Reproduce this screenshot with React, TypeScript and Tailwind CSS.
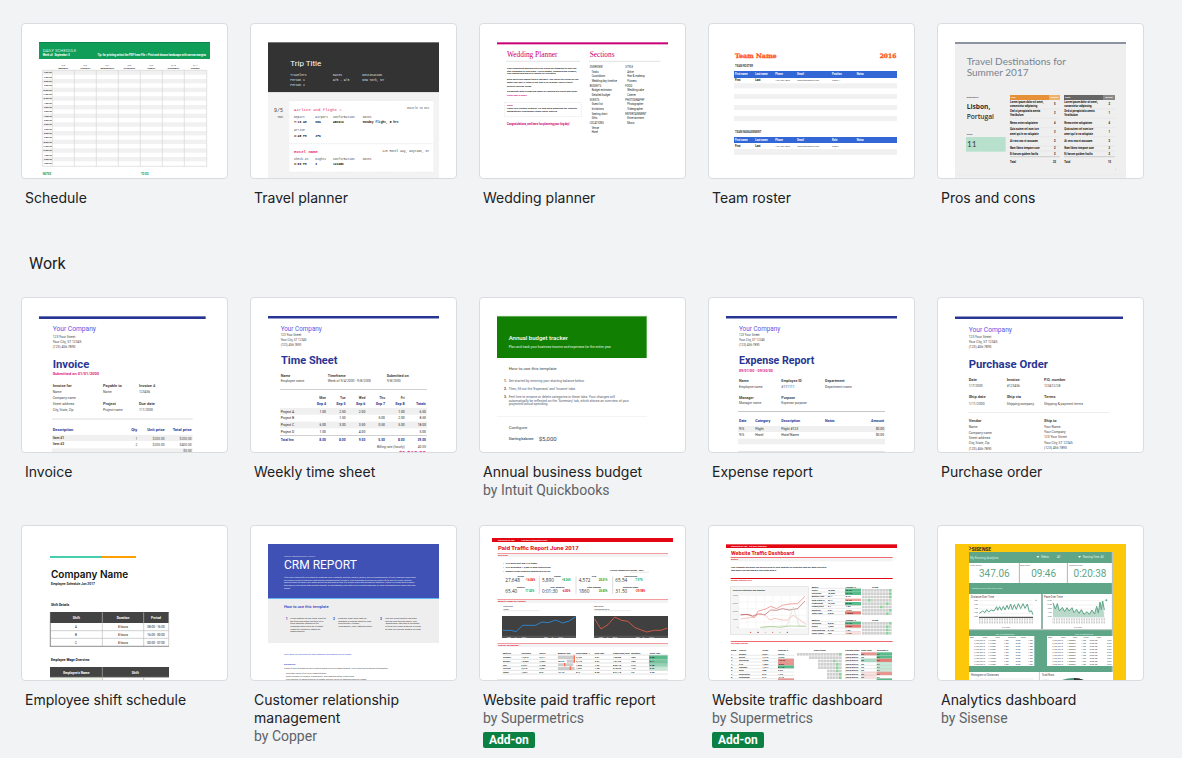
import type { ReactNode } from "react";

const MONO = "'Liberation Mono', monospace";
const SERIF = "'Liberation Serif', serif";
const SLAB = "'DejaVu Serif', serif";
const LATO = "Lato, sans-serif";
const OPEN = "'Open Sans', sans-serif";
const INTER = "Inter, sans-serif";

type TextProps = {
  x: number;
  y: number;
  s?: number;
  c?: string;
  b?: boolean | number;
  f?: string;
  end?: boolean;
  mid?: boolean;
  children: ReactNode;
};

function T({ x, y, s = 10, c = "#444", b, f, end, mid, children }: TextProps) {
  return (
    <text
      x={x}
      y={y}
      className="whitespace-pre"
      fontSize={s}
      fill={c}
      fontWeight={b === true ? 700 : b || 400}
      fontFamily={f}
      textAnchor={end ? "end" : mid ? "middle" : "start"}
    >
      {children}
    </text>
  );
}

// a block of text lines, one under the other
function Lines({ lines, y, step, ...rest }: Omit<TextProps, "children"> & { lines: string[]; step: number }) {
  return (
    <>
      {lines.map((line, i) => (
        <T key={i} y={y + i * step} {...rest}>
          {line}
        </T>
      ))}
    </>
  );
}

// one table row: the same baseline, a list of columns
function Row({ cells, xs, ...rest }: Omit<TextProps, "children" | "x"> & { cells: string[]; xs: number[] }) {
  return (
    <>
      {cells.map((cell, i) => (
        <T key={i} x={xs[i]} {...rest}>
          {cell}
        </T>
      ))}
    </>
  );
}

function Box({ x, y, w, h, c }: { x: number; y: number; w: number; h: number; c: string }) {
  return <rect x={x} y={y} width={w} height={h} fill={c} />;
}

// thumbnails are drawn three units to the pixel
function Thumb({ x, y, children }: { x: number; y: number; children: ReactNode }) {
  return (
    <svg viewBox={`${x} ${y} 615 462`} className="block w-full font-['Roboto',sans-serif]" aria-hidden="true">
      {children}
    </svg>
  );
}

function ScheduleThumb() {
  const days = ["MONDAY", "TUESDAY", "WEDNESDAY", "THURSDAY", "FRIDAY", "SATURDAY", "SUNDAY"];
  return (
    <Thumb x={36} y={42}>
      <Box x={87} y={96} w={513} h={51} c="#0f9d58" />
      <Box x={87} y={96} w={513} h={2} c="#0b7d45" />
      <T x={98} y={126} s={13} c="#d5f0e2">DAILY SCHEDULE</T>
      <T x={98} y={138} s={8} c="#fff" b>Week of:  September 5</T>
      <T x={588} y={138} s={8} c="#fff" b end>
        Tip: for printing select the PDF from File &gt; Print and choose landscape with narrow margins
      </T>
      {days.map((day, i) => (
        <g key={day}>
          <T x={160 + i * 66} y={167} s={7} mid>{`9/${5 + i}`}</T>
          <T x={160 + i * 66} y={176} s={7} c="#222" b mid>{day}</T>
        </g>
      ))}
      {Array.from({ length: 22 }, (_, i) => (
        <g key={i}>
          {i % 2 === 0 && <Box x={97} y={181 + i * 13} w={492} h={13} c="#f1f1f1" />}
          <T x={125} y={190 + i * 13} s={6} c="#222" b end>
            {`${((i + 5) % 12) + 1}:00 ${i < 6 ? "AM" : "PM"}`}
          </T>
        </g>
      ))}
      <path
        d="M97 181H590V469H97ZM127 181V469M193 181V469M259 181V469M325 181V469M391 181V469M457 181V469M523 181V469"
        fill="none"
        stroke="#d4d4d4"
        strokeWidth="2"
      />
      <T x={98} y={494} s={8} c="#0f9d58" b>NOTES</T>
      <T x={393} y={494} s={8} c="#0f9d58" b>TO DO</T>
    </Thumb>
  );
}

function TravelThumb() {
  return (
    <Thumb x={33} y={42}>
      <Box x={84} y={97} w={513} h={150} c="#333" />
      <Box x={84} y={247} w={513} h={260} c="#f3f3f3" />
      <T x={151} y={167} s={24} c="#fff">Trip Title</T>
      <Lines lines={["Travelers", "Person 1", "Person 2"]} x={151} y={198} step={15} s={9} c="#eee" f={MONO} />
      <Lines lines={["Dates", "9/5 - 9/8"]} x={279} y={198} step={15} s={9} c="#eee" f={MONO} />
      <Lines lines={["Destination", "New York, NY"]} x={367} y={198} step={15} s={9} c="#eee" f={MONO} />
      <Box x={148} y={271} w={432} h={217} c="#fff" />
      <path d="M148 271H580M148 401H580M148 487H580" stroke="#ddd" strokeWidth="2" strokeDasharray="3 2" />
      <T x={102} y={305} s={15} f={MONO}>9/5</T>
      <T x={113} y={324} s={9} f={MONO}>Mon</T>
      <T x={162} y={302} s={12} c="#e91e63" f={MONO}>Airline and flight #</T>
      <T x={567} y={298} s={8} f={MONO} end>Seattle to NYC</T>
      <Row cells={["Depart", "Airport", "Confirmation", "Notes"]} xs={[162, 226, 279, 368]} y={323} s={9} f={MONO} />
      <Row cells={["7:10 AM", "SEA", "ABCD12", "Monday flight, 5 hrs"]} xs={[162, 226, 279, 368]} y={338} s={9} c="#111" b f={MONO} />
      <T x={162} y={362} s={9} f={MONO}>Arrive</T>
      <Row cells={["3:45 PM", "JFK"]} xs={[162, 226]} y={380} s={9} c="#111" b f={MONO} />
      <T x={162} y={429} s={12} c="#e91e63" b f={MONO}>Hotel name</T>
      <T x={567} y={426} s={9} f={MONO} end>123 Hotel Way, Anytown, NY</T>
      <Row cells={["Check-in", "Nights", "Confirmation", "Notes"]} xs={[162, 226, 279, 368]} y={451} s={9} f={MONO} />
      <Row cells={["3:00 PM", "3", "123ABC"]} xs={[162, 226, 279]} y={466} s={9} c="#111" b f={MONO} />
    </Thumb>
  );
}

function WeddingThumb() {
  return (
    <Thumb x={30} y={42}>
      <Box x={81} y={97} w={513} h={6} c="#c90076" />
      <T x={111} y={142} s={22} c="#c90076" f={SERIF}>Wedding Planner</T>
      <T x={359} y={142} s={22} c="#c90076" f={SERIF}>Sections</T>
      <path d="M108 154H330M357 154H571" stroke="#d5d5d5" strokeWidth="2" />
      <Lines
        lines={["Start something planning easier by using this template to help you", "stay organized in your plans. Here's budget, shopping and vendors,", "your budget and tables to guests for reviewing."]}
        x={111} y={177} step={8} s={7} c="#111" b
      />
      <Lines
        lines={["Each sheet can support with a category. You can fill the areas as you", "make your day! If listed in this text or to consider each of these", "projects specific needs."]}
        x={111} y={210} step={10} s={7} c="#111" b
      />
      <T x={111} y={246} s={7} c="#111" b>Collaborate with friends and family by sharing this sheet with them:</T>
      <T x={111} y={257} s={7} c="#c90076" b>Learn how to share</T>
      <rect x="104" y="277" width="230" height="43" fill="none" stroke="#bbb" strokeDasharray="3 2" />
      <T x={111} y={288} s={7} c="#c90076" b>NOTE</T>
      <Lines
        lines={["Some cells contain formulas. Try and avoid modifying the contents", "automatically recalculates items you've entered."]}
        x={111} y={298} step={9} s={7} c="#111" b
      />
      <T x={111} y={345} s={8} c="#c90076" b>Congratulations, and have fun planning your big day!</T>
      <Lines
        lines={["OVERVIEW", "   Tasks", "   Countdown", "   Wedding day timeline", "BUDGETS", "   Budget estimator", "   Detailed budget", "GUESTS", "   Guest list", "   Invitations", "   Seating chart", "   Gifts", "LOCATIONS", "   Venue", "   Hotel"]}
        x={359} y={174} step={14} s={8} c="#222"
      />
      <Lines
        lines={["STYLE", "   Attire", "   Hair & makeup", "   Flowers", "FOOD", "   Wedding cake", "   Caterer", "PHOTOGRAPHY", "   Photographer", "   Videographer", "ENTERTAINMENT", "   Entertainment", "   Music"]}
        x={466} y={174} step={14} s={8} c="#222"
      />
    </Thumb>
  );
}

function RosterThumb() {
  const xs = [105, 166, 226, 292, 396, 470];
  return (
    <Thumb x={27} y={42}>
      <g stroke="#ff5722" strokeWidth="1">
        <T x={105} y={144} s={19} c="#ff5722" b f={SLAB}>Team Name</T>
        <T x={589} y={144} s={18} c="#ff5722" b f={SLAB} end>2016</T>
      </g>
      <T x={105} y={170} s={8} b>TEAM ROSTER</T>
      <Box x={102} y={183} w={489} h={21} c="#3367d6" />
      <Row cells={["First name", "Last name", "Phone", "Email", "Position", "Notes"]} xs={xs} y={195} s={8} c="#fff" b />
      <Row cells={["First", "Last"]} xs={xs} y={214} s={8} c="#111" b />
      <Row cells={["123-456-7890", "email@example.com", "Player 1"]} xs={xs.slice(2)} y={214} s={7} />
      {[220, 252, 285, 318].map((y) => (
        <Box key={y} x={102} y={y} w={489} h={15} c="#f1f1f1" />
      ))}
      <T x={105} y={368} s={8} b>TEAM MANAGEMENT</T>
      <Box x={102} y={381} w={489} h={18} c="#3367d6" />
      <Row cells={["First name", "Last name", "Phone", "Email", "Role", "Notes"]} xs={xs} y={393} s={8} c="#fff" b />
      <Row cells={["First", "Last"]} xs={xs} y={411} s={8} c="#111" b />
      <Row cells={["123-456-7890", "email@example.com", "Coach"]} xs={xs.slice(2)} y={411} s={7} />
      <Box x={102} y={417} w={489} h={18} c="#f1f1f1" />
    </Thumb>
  );
}

function ProsConsThumb() {
  const pros = ["Lorem ipsum dolor sit amet,", "consectetur adipiscing", "Sed ut perspiciatis omnis", "Vestibulum", "Nemo enim voluptatem", "Quis autem vel eum iure", "amet qui in ea voluptate", "At vero eos et accusam", "Nam libero tempore cum", "Et harum quidem facilis"];
  const ys = [279, 291, 307, 319, 342, 361, 374, 396, 417, 434];
  return (
    <Thumb x={714} y={42}>
      <Box x={765} y={97} w={513} h={410} c="#efefef" />
      <Box x={765} y={97} w={513} h={4} c="#5a6378" />
      <T x={800} y={165} s={30} c="#788391" f={LATO}>Travel Destinations for</T>
      <T x={800} y={198} s={30} c="#788391" f={LATO}>Summer 2017</T>
      <T x={800} y={264} s={7} c="#222">Destination</T>
      <T x={800} y={296} s={20} c="#333" b f={OPEN}>Lisbon,</T>
      <T x={800} y={328} s={20} c="#333" b={600} f={OPEN}>Portugal</T>
      <T x={800} y={376} s={7} c="#222">Score</T>
      <Box x={798} y={381} w={119} h={44} c="#b7e1cd" />
      <T x={801} y={411} s={25} c="#444" f={LATO}>11</T>
      <Box x={930} y={255} w={117} h={15} c="#e69138" />
      <Box x={1047} y={255} w={33} h={15} c="#f0b26b" />
      <Box x={1092} y={255} w={117} h={15} c="#666" />
      <Box x={1209} y={255} w={36} h={15} c="#888" />
      <T x={932} y={265} s={7} c="#fff" b>Pros</T>
      <T x={1063} y={265} s={7} c="#fff" b mid>Weight</T>
      <T x={1095} y={265} s={7} c="#fff" b>Cons</T>
      <T x={1227} y={265} s={7} c="#fff" b mid>Weight</T>
      {ys.map((y, i) => (
        <g key={y}>
          <T x={930} y={y} s={8} c="#111" b>{pros[i]}</T>
          <T x={1093} y={y} s={8} c="#111" b>{pros[i]}</T>
        </g>
      ))}
      {[286, 313, 342, 369, 396, 417, 434].map((y, i) => (
        <g key={y}>
          <T x={1064} y={y} s={8} c="#111" b mid>{"5343222"[i]}</T>
          <T x={1228} y={y} s={8} c="#111" b mid>{"2141232"[i]}</T>
        </g>
      ))}
      <path
        d="M930 297H1080M930 325H1080M930 353H1080M930 380H1080M930 408H1080M930 423H1080M1092 297H1245M1092 325H1245M1092 353H1245M1092 380H1245M1092 408H1245M1092 423H1245"
        stroke="#ccc"
        strokeDasharray="3 2"
      />
      <path d="M930 440H1080M1092 440H1245" stroke="#bbb" strokeWidth="2" />
      <Row cells={["Total", "23", "Total", "15"]} xs={[930, 1059, 1093, 1224]} y={459} s={8} c="#111" b />
      <T x={1245} y={480} s={7} c="#444">+</T>
      <path d="M765 494H1278" stroke="#ddd" strokeDasharray="3 3" />
    </Thumb>
  );
}

const NAVY = "#283593";
const VIOLET = "#6254e0";
const PINK = "#e01b84";
const ADDRESS = ["123 Your Street", "Your City, ST 12345", "(123) 456-7890"];

function InvoiceThumb() {
  return (
    <Thumb x={36} y={174}>
      <Box x={87} y={229} w={500} h={8} c={NAVY} />
      <T x={128} y={274} s={20} c={VIOLET}>Your Company</T>
      <Lines lines={ADDRESS} x={128} y={293} step={16} s={10} />
      <T x={128} y={384} s={34} c={NAVY} b>Invoice</T>
      <T x={128} y={406} s={12} c={PINK} b>Submitted on 01/01/2000</T>
      <Row cells={["Invoice for", "Payable to", "Invoice #"]} xs={[128, 279, 387]} y={441} s={12} b />
      <Row cells={["Name", "Name", "123456"]} xs={[128, 279, 387]} y={458} />
      <Lines lines={["Company name", "Street address", "City, State, Zip"]} x={128} y={476} step={18} />
      <Row cells={["Project", "Due date"]} xs={[279, 387]} y={496} s={12} b />
      <Row cells={["Project name", "1/1/2000"]} xs={[279, 387]} y={513} />
      <Box x={126} y={534} w={422} h={6} c="#eee" />
      <T x={128} y={572} s={12} c={NAVY} b>Description</T>
      <Row cells={["Qty", "Unit price", "Total price"]} xs={[382, 464, 545]} y={572} s={12} c={NAVY} b end />
      <Box x={126} y={585} w={422} h={18} c="#f0f0f0" />
      <Box x={126} y={625} w={422} h={18} c="#f0f0f0" />
      <T x={128} y={597} b>Item #1</T>
      <T x={128} y={616} b>Item #2</T>
      <Row cells={["1", "$200.00", "$200.00"]} xs={[382, 464, 545]} y={599} end />
      <Row cells={["2", "$200.00", "$400.00"]} xs={[382, 464, 545]} y={618} end />
      <T x={545} y={635} end>$0.00</T>
    </Thumb>
  );
}

function TimeSheetThumb() {
  const xs = [258, 317, 376, 435, 494, 558];
  const rows = [
    ["Project A", "1.00", "2.50", "2.00", "", "1.00", "6.50"],
    ["Project B", "", "1.50", "", "5.00", "2.00", "8.50"],
    ["Project C", "6.00", "3.00", "3.50", "0.50", "5.00", "18.00"],
    ["Project D", "1.00", "", "4.00", "", "", "5.00"],
  ];
  return (
    <Thumb x={33} y={24}>
      <Box x={84} y={78} w={513} h={6} c={NAVY} />
      <Box x={84} y={84} w={513} h={3} c="#959cce" />
      <T x={122} y={123} s={19} c={VIOLET}>Your Company</T>
      <Lines lines={ADDRESS} x={122} y={139} step={14} s={9} />
      <T x={123} y={223} s={33} c={NAVY} b>Time Sheet</T>
      <Row cells={["Name", "Timeframe", "Submitted on"]} xs={[122, 263, 440]} y={261} s={11} b />
      <Row cells={["Employee name", "Week of 9/4/2000 - 9/8/2000", "9/8/2000"]} xs={[122, 263, 440]} y={276} />
      <Box x={120} y={297} w={441} h={2} c="#bbb" />
      <Row cells={["Mon", "Tue", "Wed", "Thu", "Fri"]} xs={xs} y={328} b end />
      <Row cells={["Sep 4", "Sep 5", "Sep 6", "Sep 7", "Sep 8", "Totals"]} xs={xs} y={344} s={11} c={NAVY} b end />
      <Box x={120} y={354} w={441} h={20} c="#f0f0f0" />
      <Box x={120} y={395} w={441} h={20} c="#f0f0f0" />
      {rows.map(([name, ...hours], i) => (
        <g key={name}>
          <T x={122} y={368 + i * 20} c="#222">{name}</T>
          <Row cells={hours} xs={xs} y={368 + i * 20} c="#222" end />
        </g>
      ))}
      <Box x={120} y={435} w={441} h={2} c="#bbb" />
      <T x={122} y={453} c={NAVY} b>Total hrs</T>
      <Row cells={["8.00", "8.00", "9.50", "5.50", "8.00", "39.00"]} xs={xs} y={453} c={NAVY} b end />
      <Row cells={["Billing rate (hourly)", "40.00"]} xs={[494, 558]} y={473} end />
      <T x={558} y={496} s={18} c={PINK} b end>$1,560.00</T>
    </Thumb>
  );
}

function BudgetThumb() {
  return (
    <Thumb x={30} y={24}>
      <Box x={81} y={78} w={450} h={126} c="#118002" />
      <path d="M81 79H530V204" fill="none" stroke="#9fce9a" strokeWidth="2" />
      <T x={116} y={149} s={18} c="#fff" b={500}>Annual budget tracker</T>
      <T x={116} y={173} s={10} c="#e5f5e3">Plan and track your business income and expenses for the entire year</T>
      <T x={116} y={240} s={13}>How to use this template</T>
      <T x={102} y={277} s={10} b>1.</T>
      <T x={116} y={277} s={10} c="#4f5b6e">Get started by entering your starting balance below.</T>
      <T x={102} y={300} s={10} b>2.</T>
      <T x={116} y={300} s={10} c="#4f5b6e">Then, fill out the 'Expenses' and 'Income' tabs.</T>
      <T x={102} y={324} s={10} b>3.</T>
      <Lines
        lines={["Feel free to rename or delete categories in these tabs. Your changes will", "automatically be reflected on the 'Summary' tab, which shows an overview of your", "projected/actual spending."]}
        x={116} y={324} step={11} s={10} c="#4f5b6e"
      />
      <Box x={81} y={379} w={450} h={1} c="#ddd" />
      <T x={116} y={416} s={13}>Configure</T>
      <T x={116} y={450} s={10} c="#334960" b={500}>Starting balance:</T>
      <T x={206} y={453} s={18} c="#334960">$5,000</T>
    </Thumb>
  );
}

function ExpenseThumb() {
  return (
    <Thumb x={27} y={24}>
      <Box x={78} y={78} w={513} h={6} c={NAVY} />
      <Box x={78} y={84} w={513} h={3} c="#959cce" />
      <T x={117} y={122} s={19} c={VIOLET}>Your Company</T>
      <Lines lines={ADDRESS} x={117} y={139} step={15} s={9} />
      <T x={117} y={223} s={32} c={NAVY} b>Expense Report</T>
      <T x={117} y={245} s={11} c={PINK} b>09/01/00 - 09/30/00</T>
      <Row cells={["Name", "Employee ID", "Department"]} xs={[117, 244, 375]} y={277} s={11} b />
      <Row cells={["Employee name", "#111111", "Department name"]} xs={[117, 244, 375]} y={293} />
      <Row cells={["Manager", "Purpose"]} xs={[117, 244]} y={327} s={11} b />
      <Row cells={["Manager name", "Expense purpose"]} xs={[117, 244]} y={342} />
      <Box x={114} y={363} w={441} h={2} c="#aaa" />
      <Row cells={["Date", "Category", "Description", "Notes"]} xs={[117, 166, 244, 375]} y={397} s={11} c={NAVY} b />
      <T x={552} y={397} s={11} c={NAVY} b end>Amount</T>
      <Box x={114} y={408} w={441} h={18} c="#f0f0f0" />
      <Row cells={["9/5", "Flight", "Flight #123", "", "$0.00"]} xs={[117, 166, 244, 375, 527]} y={420} c="#222" />
      <Row cells={["9/5", "Hotel", "Hotel Name", "", "$0.00"]} xs={[117, 166, 244, 375, 527]} y={439} c="#222" />
      <Box x={114} y={446} w={441} h={17} c="#f0f0f0" />
      <Box x={114} y={483} w={441} h={3} c="#e5e5e5" />
    </Thumb>
  );
}

function PurchaseThumb() {
  return (
    <Thumb x={714} y={24}>
      <Box x={765} y={78} w={504} h={3} c="#959cce" />
      <Box x={765} y={81} w={504} h={6} c={NAVY} />
      <T x={806} y={125} s={20} c={VIOLET}>Your Company</T>
      <Lines lines={ADDRESS} x={806} y={144} step={15} s={10} />
      <T x={806} y={234} s={34} c={NAVY} b>Purchase Order</T>
      <Row cells={["Date", "Invoice", "P.O. number"]} xs={[806, 920, 1032]} y={273} s={12} b />
      <Row cells={["1/7/2000", "#123456", "123412/28"]} xs={[806, 920, 1032]} y={290} />
      <Row cells={["Ship date", "Ship via", "Terms"]} xs={[806, 920, 1032]} y={325} s={12} b />
      <Row cells={["1/11/2000", "Shipping company", "Shipping & payment terms"]} xs={[806, 920, 1032]} y={344} />
      <Box x={804} y={367} w={426} h={1} c="#ccc" />
      <Row cells={["Vendor", "Ship to"]} xs={[806, 1032]} y={396} s={12} b />
      <Lines lines={["Name", "Company name", "Street address", "City, State, Zip", "(123) 456-7890"]} x={806} y={415} step={16} />
      <Lines lines={["Your Name", "Your Company", "123 Your Street", "Your City, ST 12345", "(123) 456-7890"]} x={1032} y={413} step={16} />
    </Thumb>
  );
}

function ShiftThumb() {
  return (
    <Thumb x={36} y={24}>
      <Box x={120} y={114} w={156} h={6} c="#45cfac" />
      <Box x={276} y={114} w={102} h={6} c="#ff9f00" />
      <T x={123} y={181} s={30} c="#111" b={600} f={INTER}>Company Name</T>
      <T x={123} y={200} s={10} c="#111" b={600}>Employee Schedule Jan 2017</T>
      <T x={123} y={263} s={10} c="#111" b>Shift Details</T>
      <Box x={120} y={282} w={357} h={33} c="#434343" />
      <Row cells={["Shift", "Duration", "Period"]} xs={[199, 339, 438]} y={302} c="#fff" b mid />
      {["A|8 hours|08:00 - 16:00", "B|8 hours|16:00 - 00:00", "C|8 hours|00:00 - 07:00"].map((line, i) => (
        <Row key={line} cells={line.split("|")} xs={[198, 339, 438]} y={329 + i * 24} s={9} c="#111" mid />
      ))}
      <path d="M121 315V385H476V283M277 283V385M401 283V385M121 338H476M121 361H476" fill="none" stroke="#bbb" strokeWidth="2" />
      <path d="M121 283V386M120 385H477" stroke="#777" strokeWidth="2" />
      <T x={123} y={428} s={10} c="#111" b>Employee Wage Overview</T>
      <Box x={120} y={447} w={357} h={31} c="#434343" />
      <Row cells={["Employee's Name", "Shift"]} xs={[199, 376]} y={467} c="#fff" b mid />
      <path d="M277 447V486M401 478V486M120 478H476" stroke="#aaa" strokeWidth="2" />
      <Box x={122} y={480} w={154} h={6} c="#eef6ea" />
    </Thumb>
  );
}

function CrmThumb() {
  return (
    <Thumb x={33} y={24}>
      <Box x={84} y={78} w={513} h={162} c="#3f51b5" />
      <Box x={84} y={240} w={513} h={3} c="#64b5f6" />
      <Box x={84} y={243} w={513} h={132} c="#eeeeef" />
      <T x={132} y={116} s={7} c="#c5cbea">SALES MANAGEMENT TOOLS</T>
      <T x={132} y={153} s={36} c="#fff">CRM REPORT</T>
      <Lines
        lines={[
          "If you are looking for a system to organize your contacts, activity, emails, phone, and correspondence of your ongoing sales then",
          "you need a CRM (customer relationship management) solution. This template provides you with a first set of a CRM. But the",
          "best solution to track your deals would be working on one full-blown CRM with advanced features. There is a CRM which eases",
          "through by your sales with Google Sheets. To get started, just enter your contact manually or copy and paste your deals into this",
          "sheet.",
        ]}
        x={132} y={180} step={8} s={7} c="#e4e8fa"
      />
      <T x={132} y={271} s={12} c="#3040c0" b={500}>How to use this template</T>
      <Row cells={["1", "2", "3"]} xs={[137, 279, 420]} y={306} s={10} c="#3040c0" b />
      <Lines
        lines={["When setting up the initial CRM for", "the first time enter the field on a", "fixed starting categories for", "characteristics such as Contact", "Types for People or Stage for", "Opportunities."]}
        x={151} y={303} step={8} s={7} c="#333"
      />
      <Lines
        lines={["Keep the CRM up to date by", "updating or adding items to new", "closing with \"People\",", "\"Companies\", and \"Opportunities\"."]}
        x={294} y={303} step={8} s={7} c="#333"
      />
      <Lines
        lines={["Use the CRM sheet to get daily", "activity and find the deals. The", "\"Dashboard\" tab uses a summary", "of how your sales pipeline is doing", "to help you decide what to do next."]}
        x={436} y={303} step={8} s={7} c="#333"
      />
      <T x={132} y={412} s={7} c="#4255c9">Let's walk you through the tabs between the buttons on the sheet.</T>
      <T x={132} y={441} s={7} c="#4255c9" b>Dashboard</T>
      <T x={132} y={452} s={7}>Think of this first tab as your control panel on your opportunities. You'll see the following information:</T>
      <Lines
        lines={["· The total value of all your opportunities", "· Total number of People, Companies, and Opportunities in the CRM", "· The number of Opportunities by Stage and the value of Opportunities by Stage"]}
        x={134} y={469} step={8} s={7}
      />
    </Thumb>
  );
}

const RED = "#e30613";

function PaidTrafficThumb() {
  const kpis: [string, string, string, boolean][][] = [
    [["Clicks", "27,648", "-16.86%", false], ["Spend", "5,890", "+8.26%", true], ["CTR", "4,572", "28.81%", true], ["Conversions", "65.54", "7.97%", true]],
    [["Visitors", "65.40", "17.82%", true], ["Avg. duration", "0:01:30", "-4.80%", false], ["Total signups", "1860", "28.80%", true], ["Revenue share", "31.50", "-29.98%", false]],
  ];
  const table = ["Metrics|Sessions|Users|Bounce rate|Goal comp. 1|Goal rate|Pageviews/visit|Duration|Conv. rate", "organic|14,842|9,211|54.1%|3,429|2.81|1:05.80|30%|9.68", "google|12,006|7,903|38.2%|3,110|2.54|1:01.20|28%|8.11", "cpc|6,931|4,488|35.0%|1,830|1.62|0:56.10|24%|6.98", "referral|3,210|2,001|28.7%|1,204|1.38|0:48.60|17%|5.36", "email|1,077|842|12.4%|517|0.90|0:31.10|9%|2.20"];
  return (
    <Thumb x={30} y={24}>
      <Box x={66} y={60} w={543} h={12} c={RED} />
      <T x={84} y={68} s={6} c="#fff" b>Supermetrics.com</T>
      <T x={154} y={68} s={7} c="#fff" b>Get more templates here</T>
      <T x={84} y={96} s={18} c={RED} b>Paid Traffic Report June 2017</T>
      {[105, 243, 375].map((y, i) => (
        <g key={y}>
          <Box x={82} y={y} w={512} h={2} c="#ee6a70" />
          <Box x={82} y={y + 3} w={512} h={9} c="#f3f3f3" />
          <T x={84} y={y + 8} s={7} c={RED} b>{["Overview", "Website Traffic by Channel", "Sources Breakdown"][i]}</T>
        </g>
      ))}
      <Lines lines={["•   77% goals met and % of traffic", "•   77% generated 1.3,886 of paid conversions", "•   Organic clicks from this month up to 87.5%"]} x={99} y={137} step={12} s={7} c="#111" b />
      <T x={420} y={159} s={7} c="#222" b>Period comparison month  June</T>
      <path d="M480 163H537M100 278H208M373 278H482" stroke="#bbb" strokeWidth="1" />
      {kpis.map((row, r) =>
        row.map(([label, value, change, up], i) => (
          <g key={label}>
            <T x={152 + i * 110} y={177 + r * 33} s={7} c="#111" b mid>{label}</T>
            <T x={106 + i * 110} y={193 + r * 32} s={14} c="#333" f={OPEN}>{value}</T>
            <T x={166 + i * 110} y={189 + r * 32} s={8} c={up ? "#10a83c" : RED} b>{change}</T>
          </g>
        ))
      )}
      <path d="M208 175V228M318 175V228M428 175V228" stroke="#ccc" strokeWidth="2" />
      <Lines lines={["Sessions", "Total"]} x={100} y={268} step={9} s={7} c="#222" />
      <Lines lines={["Bounces", "Conversions %"]} x={373} y={268} step={9} s={7} c="#222" />
      <Box x={96} y={294} w={222} h={66} c="#404040" />
      <Box x={372} y={294} w={222} h={66} c="#404040" />
      <Box x={96} y={353} w={222} h={7} c="#555" />
      <Box x={372} y={353} w={222} h={7} c="#555" />
      <polyline points="99,337 122,337 138,341 158,322 196,322 216,312 236,314 256,306 278,315 298,309 317,296" fill="none" stroke="#2d83c9" strokeWidth="3" />
      <polyline points="374,303 393,333 414,320 434,297 455,307 474,310 495,329 530,342 553,337 573,337 592,330" fill="none" stroke="#cc5945" strokeWidth="3" />
      <Row cells={["Sept", "2", "2016", "Nov", "5", "2016"]} xs={[110, 135, 155, 222, 245, 265]} y={359} s={6} c="#ddd" b />
      <Row cells={["Sept", "2", "2016", "Nov", "5", "2016"]} xs={[386, 411, 428, 498, 518, 538]} y={359} s={6} c="#ddd" b />
      <Box x={537} y={412} w={56} h={12} c="#57bb8a" />
      <Box x={537} y={424} w={56} h={11} c="#73c69d" />
      <Box x={537} y={435} w={56} h={11} c="#93d2b3" />
      <Box x={537} y={446} w={56} h={11} c="#c7e9d8" />
      {table.map((line, i) => (
        <Row key={i} cells={line.split("|")} xs={[99, 154, 208, 264, 318, 374, 429, 484, 539]} y={i ? 410 + i * 11 : 408} s={7} c="#111" b />
      ))}
      <path d="M264 413H314V424H264ZM290 425H314V434H290ZM264 436H310V445H264ZM264 447H314V456H264Z" fill="#ccc" />
      <path d="M313 412V434M284 435V445M301 445V456" stroke="#ff6e50" strokeWidth="4" />
      <path d="M97 411H594M97 424H264M318 424H594M97 435H264M318 435H594M97 446H264M318 446H594M97 457H594M97 468H594" stroke="#aaa" />
      <Box x={82} y={483} w={512} h={2} c="#ddd" />
    </Thumb>
  );
}

// grey activity cells with a few highlighted in green
function Heat({ x, y, cols, rows, hot }: { x: number; y: number; cols: number; rows: number; hot: number[] }) {
  return (
    <>
      {Array.from({ length: rows * cols }, (_, i) => {
        const r = Math.floor(i / cols);
        const col = i % cols;
        return (
          <rect
            key={i}
            x={x + col * 9}
            y={y + r * 10}
            width={8}
            height={8}
            fill={hot[r] === col ? "#8fd19e" : "#d0d0d0"}
          />
        );
      })}
    </>
  );
}

function TrafficThumb() {
  const metrics = ["Metric||Change %|Trend", "Visits|15,000|16.4%", "Sessions|18,000|12.1%", "Bounce rate|57.1|0.4%", "New visits %|37.4|-9.1%", "Pageviews|46,229|22.0%", "Pages/visit|3.1|1.0%", "Duration|2:01|-2.8%", "Total conv.|2,890|-18.8%"];
  const pages = ["1|google|5,021|25.0%", "2|direct|4,712|19.0%", "3|facebook|2,580|-10.4%", "4|t.co|1,802|-8.8%", "5|linkedin|1,244|21.1%", "6|bing|980|2.0%", "7|newsletter|812|1.2%", "8|instagram|644|-3.1%"];
  return (
    <Thumb x={27} y={24}>
      <Box x={78} y={79} w={513} h={11} c={RED} />
      <T x={93} y={87} s={6} c="#fff" b>Supermetrics.com   Get more templates</T>
      <T x={93} y={110} s={16} c={RED} b>Website Traffic Dashboard</T>
      <Box x={92} y={117} w={486} h={3} c="#ee6a70" />
      <Box x={92} y={121} w={486} h={9} c="#f3f3f3" />
      <T x={93} y={126} s={7} c={RED} b>Details</T>
      <T x={93} y={151} s={7} c="#111" b>This template provides you an overview of your website on Analytics and the data collected</T>
      <T x={93} y={159} s={7} c="#111" b>and takes you just about a few steps with it.</T>
      <Box x={92} y={180} w={486} h={3} c={RED} />
      <T x={93} y={188} s={6} c={RED} b>Monthly statistics 2017</T>
      <rect x="92" y="206" width="233" height="144" fill="#f5f5f5" stroke="#ddd" strokeWidth="2" />
      <Box x={117} y={232} w={203} h={100} c="#fff" />
      <T x={98} y={218} s={7} c="#222" b>Users by statistics and months</T>
      <path d="M117 232H320M117 252H320M117 272H320M117 292H320M117 312H320M117 332H320M117 232V332M143 232V332M168 232V332M194 232V332M219 232V332M245 232V332M270 232V332M296 232V332M320 232V332" stroke="#e8e8e8" strokeWidth="1" />
      <Lines lines={["40000", "30000", "20000", "10000", "0"]} x={114} y={235} step={24} s={6} c="#888" end />
      <g fill="none" strokeWidth="2">
        <polyline points="122,289 150,290 162,300 175,279 195,274 212,265 230,272 247,262 268,258 293,257 315,235" stroke="#e8776f" />
        <polyline points="122,291 140,289 158,294 175,288 195,290 212,276 230,277 247,272 268,276 293,272 315,249" stroke="#b35b61" />
        <polyline points="122,303 150,299 165,295 180,286 197,293 210,306 225,301 245,306 262,306 280,292 293,301 318,319" stroke="#f3aaa6" />
        <polyline points="185,330 230,325 262,322 280,267 297,324 318,324" stroke="#d4dfcf" />
        <polyline points="180,328 210,325 240,328 270,324 317,325" stroke="#93c47d" />
      </g>
      {["#e53935", "#7d1a1a", "#e8b0b0", "#e06666", "#93c47d", "#38761d"].map((c, i) => (
        <circle key={c} cx={152 + i * 22} cy={343} r={2} fill={c} />
      ))}
      <Box x={435} y={212} w={48} h={9} c="#57bb8a" />
      <Box x={435} y={221} w={48} h={10} c="#57bb8a" />
      <Box x={435} y={242} w={48} h={7} c="#f0a19a" />
      <Box x={435} y={252} w={48} h={10} c="#57bb8a" />
      <Box x={435} y={280} w={48} h={9} c="#e67c73" />
      <Box x={435} y={311} w={48} h={9} c="#57bb8a" />
      <Box x={435} y={320} w={48} h={9} c="#e67c73" />
      <Box x={435} y={340} w={48} h={9} c="#fae0de" />
      {metrics.map((line, i) => (
        <Row key={i} cells={line.split("|")} xs={[335, 383, 437, 516]} y={i ? 208 + i * 10 : 209} s={7} c="#111" b />
      ))}
      {["Metrics||Change %|Trend", "Sessions|5,030|14.4%", "Goals|1,809|-4.2%", "Transactions|5,130|1.0%", "Conv. value|400|-1.9%"].map((line, i) => (
        <Row key={i} cells={line.split("|")} xs={[335, 383, 437, 516]} y={308 + i * 10} s={7} c="#111" b />
      ))}
      <path d="M334 211H483M334 222H435M334 232H435M334 242H435M334 252H435M334 262H483M334 271H483M334 280H483M334 290H483M334 311H483M334 320H483M334 330H483M334 340H483M334 349H483" stroke="#bbb" />
      <Heat x={486} y={213} cols={10} rows={8} hot={[9, 9, 9, 2, 8, 6, 9, 8]} />
      <Heat x={486} y={312} cols={10} rows={4} hot={[9, 8, 8, 8]} />
      <Box x={92} y={369} w={486} h={3} c="#ee6a70" />
      <T x={93} y={377} s={6} c={RED} b>Top traffic sources</T>
      <Box x={234} y={422} w={48} h={20} c="#ea948d" />
      <Box x={234} y={442} w={48} h={9} c="#57bb8a" />
      <Box x={234} y={481} w={48} h={5} c="#ea948d" />
      <Box x={483} y={403} w={47} h={9} c="#ea948d" />
      <Box x={530} y={403} w={46} h={9} c="#57bb8a" />
      <Box x={530} y={412} w={46} h={10} c="#57bb8a" />
      <Box x={483} y={422} w={47} h={10} c="#a9dcc3" />
      <Box x={530} y={422} w={46} h={10} c="#e67c73" />
      <Box x={530} y={432} w={46} h={29} c="#c7e9d8" />
      <Box x={483} y={461} w={47} h={20} c="#fae0de" />
      <Box x={530} y={461} w={46} h={10} c="#ea948d" />
      <Box x={530} y={481} w={46} h={5} c="#57bb8a" />
      <Row cells={["Rank", "Source", "Visits", "Change %", "Visits trend", "Landing page", "Goal conv.", "Revenue %"]} xs={[93, 117, 187, 234, 341, 436, 484, 531]} y={399} s={7} c="#111" b />
      {pages.map((line, i) => (
        <g key={i}>
          <Row cells={[...line.split("|"), "/blog/article", "56", "24"]} xs={[93, 117, 187, 234, 436, 484, 531]} y={410 + i * 10} s={7} c="#111" b />
          <path d={`M92 ${412 + i * 10}H283M435 ${412 + i * 10}H577`} stroke="#bbb" />
        </g>
      ))}
      <Heat x={291} y={405} cols={15} rows={1} hot={[14]} />
      <Heat x={327} y={415} cols={11} rows={1} hot={[20]} />
      <Heat x={354} y={425} cols={8} rows={3} hot={[5, 6, 6]} />
      <Heat x={381} y={455} cols={5} rows={3} hot={[3, 4, 4]} />
    </Thumb>
  );
}

const TEAL = "#5fa588";

function AnalyticsThumb() {
  const stamps = Array.from({ length: 9 }, (_, i) => 369 + i * 9);
  return (
    <Thumb x={714} y={24}>
      <Box x={765} y={78} w={513} h={410} c="#fec80a" />
      <Box x={807} y={102} w={432} h={386} c={TEAL} />
      <path d="M808 86L813 91L808 96" fill="none" stroke="#222" strokeWidth="3" />
      <T x={815} y={98} s={14} c="#222" b f={INTER}>SISENSE</T>
      <T x={810} y={123} s={9} c="#d9efe4">My Running Analytics</T>
      <path d="M1009 114h9l-4 6zM1134 114h9l-4 6z" fill="#e9f6ef" />
      <Row cells={["Metric", "All", "Running Time  All"]} xs={[1024, 1071, 1149]} y={121} s={8} c="#e9f6ef" />
      <path d="M807 135H957V195H807ZM960 135H1101V195H960ZM1104 135H1236V195H1104Z" fill="#fff" />
      <Row cells={["Total Miles", "Avg Pace", "Fastest Time"]} xs={[810, 961, 1107]} y={143} s={7} c="#666" />
      <Row cells={["347.06", "09:46", "0:20:38"]} xs={[883, 1031, 1170]} y={177} s={30} c={TEAL} mid />
      <T x={816} y={213} s={7} c="#d9efe4">Distance and Pace Over Time</T>
      <Box x={807} y={228} w={216} h={106} c="#fff" />
      <Box x={1029} y={228} w={207} h={106} c="#fff" />
      <path d="M1026 228V336M958 135V195M1102 135V195M1237 102V462M807 335H1239" stroke="#c4c9c7" strokeWidth="3" />
      <Row cells={["Distance Over Time", "Pace Over Time"]} xs={[813, 1032]} y={239} s={8} c="#444" />
      <circle cx={1008} cy={247} r={2} fill={TEAL} />
      <circle cx={1219} cy={247} r={3} fill={TEAL} />
      <path d="M837 248H999M837 261H999M837 273H999M837 286H999M1058 248H1216M1058 261H1216M1058 273H1216M1058 286H1216M1058 298H1216" stroke="#d5d5d5" />
      <path d="M837 298H999" stroke="#333" strokeWidth="3" />
      <Lines lines={["8:00", "6:00", "4:00", "2:00", "0:00"]} x={834} y={250} step={12} s={6} c="#666" end />
      <Lines lines={["16:00", "12:00", "8:00", "4:00", "0:00"]} x={1055} y={250} step={12} s={6} c="#666" end />
      <polyline
        points="838,286 848,279 855,284 860,275 866,282 874,276 882,279 890,266 893,277 899,266 904,277 910,265 915,276 921,262 926,274 932,258 937,275 943,260 949,274 955,257 962,272 969,257 975,271 982,258 988,282 994,278 999,290"
        fill="none" stroke={TEAL} strokeWidth="3"
      />
      <path
        d="M1059 298V255L1066 273L1072 257L1078 279L1087 268L1094 281L1101 269L1107 279L1116 269L1122 284L1130 274L1137 286L1144 275L1152 289L1161 281L1168 289L1176 276L1184 288L1190 265L1195 285L1200 252L1204 275L1208 249L1213 298Z"
        fill="#b9d9cb"
      />
      <polyline
        points="1059,255 1066,273 1072,257 1078,279 1087,268 1094,281 1101,269 1107,279 1116,269 1122,284 1130,274 1137,286 1144,275 1152,289 1161,281 1168,289 1176,276 1184,288 1190,265 1195,285 1200,252 1204,275 1208,249 1213,276"
        fill="none" stroke={TEAL} strokeWidth="3"
      />
      {[304, 313].map((y) => (
        <path key={y} d={`M837 ${y}H999M1058 ${y}H1216`} stroke="#b5b5b5" strokeWidth="7" strokeDasharray="2 3" />
      ))}
      <Row cells={["Run Date", "Run Date"]} xs={[918, 1134]} y={329} s={6} c="#777" mid />
      <Row cells={["Top 10 Longest Runs", "Top 10 Fastest Runs"]} xs={[915, 1152]} y={352} s={6} c="#e9f6ef" mid />
      <Box x={807} y={354} w={196} h={90} c="#fff" />
      <Box x={1041} y={354} w={198} h={90} c="#fff" />
      <Row cells={["Date", "Time", "Pace", "Distance", "Miles", "Date", "Type", "Time", "Miles", "Pace"]} xs={[809, 848, 886, 924, 963, 1044, 1083, 1118, 1151, 1190]} y={360} s={6} c="#444" />
      {stamps.map((y) => (
        <Row
          key={y}
          cells={["7/20/2013", "1:45:08", "7.00", "0.08", "1.08", "4/25/2013", "1.00000", "1.00", "0:20:38", "0:07"]}
          xs={[822, 864, 912, 947, 984, 1056, 1101, 1144, 1169, 1222]}
          y={y}
          s={7}
          c="#444"
        />
      ))}
      <Box x={807} y={462} w={432} h={26} c="#fff" />
      <path d="M1018 462V486" stroke="#ccc" strokeWidth="3" />
      <Row cells={["Histogram of Distances", "Total Runs"]} xs={[813, 1025]} y={475} s={8} c="#444" />
      <path d="M825 483H1000M1027 484H1047" stroke="#ccc" />
      <path d="M1086 486Q1120 474 1151 486Z" fill="#4f9379" />
      <path d="M1122 480Q1140 480 1151 486H1122Z" fill="#333" />
    </Thumb>
  );
}

type Template = {
  title: string;
  thumb: ReactNode;
  by?: string;
  addOn?: boolean;
};

const personal: Template[] = [
  { title: "Schedule", thumb: <ScheduleThumb /> },
  { title: "Travel planner", thumb: <TravelThumb /> },
  { title: "Wedding planner", thumb: <WeddingThumb /> },
  { title: "Team roster", thumb: <RosterThumb /> },
  { title: "Pros and cons", thumb: <ProsConsThumb /> },
];

const work: Template[] = [
  { title: "Invoice", thumb: <InvoiceThumb /> },
  { title: "Weekly time sheet", thumb: <TimeSheetThumb /> },
  { title: "Annual business budget", by: "Intuit Quickbooks", thumb: <BudgetThumb /> },
  { title: "Expense report", thumb: <ExpenseThumb /> },
  { title: "Purchase order", thumb: <PurchaseThumb /> },
  { title: "Employee shift schedule", thumb: <ShiftThumb /> },
  { title: "Customer relationship management", by: "Copper", thumb: <CrmThumb /> },
  { title: "Website paid traffic report", by: "Supermetrics", addOn: true, thumb: <PaidTrafficThumb /> },
  { title: "Website traffic dashboard", by: "Supermetrics", addOn: true, thumb: <TrafficThumb /> },
  { title: "Analytics dashboard", by: "Sisense", thumb: <AnalyticsThumb /> },
];

function TemplateCard({ title, thumb, by, addOn }: Template) {
  return (
    <button type="button" className="group flex cursor-pointer flex-col text-left">
      <span className="block w-full overflow-hidden rounded border border-[#dadce0] bg-white group-hover:border-[#0f9d58]">
        {thumb}
      </span>
      <span className="mt-[10px] block px-1 font-['Inter',sans-serif] text-[14px] leading-[18px] text-[#202124]">
        {title}
      </span>
      {by && (
        <span className="block px-1 font-['Roboto',sans-serif] text-[14px] leading-[18px] text-[#5f6368]">by {by}</span>
      )}
      {addOn && (
        <span className="mt-[5px] ml-1 block self-start rounded-xs bg-[#0b8043] px-[6px] font-['Roboto',sans-serif] text-[12px] leading-4 font-bold text-white">
          Add-on
        </span>
      )}
    </button>
  );
}

function TemplateGrid({ items }: { items: Template[] }) {
  return (
    <div className="grid grid-cols-[repeat(auto-fill,207px)] items-start gap-x-[22px] gap-y-[26px]">
      {items.map((item) => (
        <TemplateCard key={item.title} {...item} />
      ))}
    </div>
  );
}

export default function App() {
  return (
    <main className="min-h-screen bg-[#f1f3f4] px-[21px] pt-[23px]">
      <section>
        <TemplateGrid items={personal} />
      </section>
      <section className="mt-[45px]">
        <h2 className="mb-[21px] pl-2 font-['Roboto',sans-serif] text-[16px] leading-6 text-[#202124]">Work</h2>
        <TemplateGrid items={work} />
      </section>
    </main>
  );
}
